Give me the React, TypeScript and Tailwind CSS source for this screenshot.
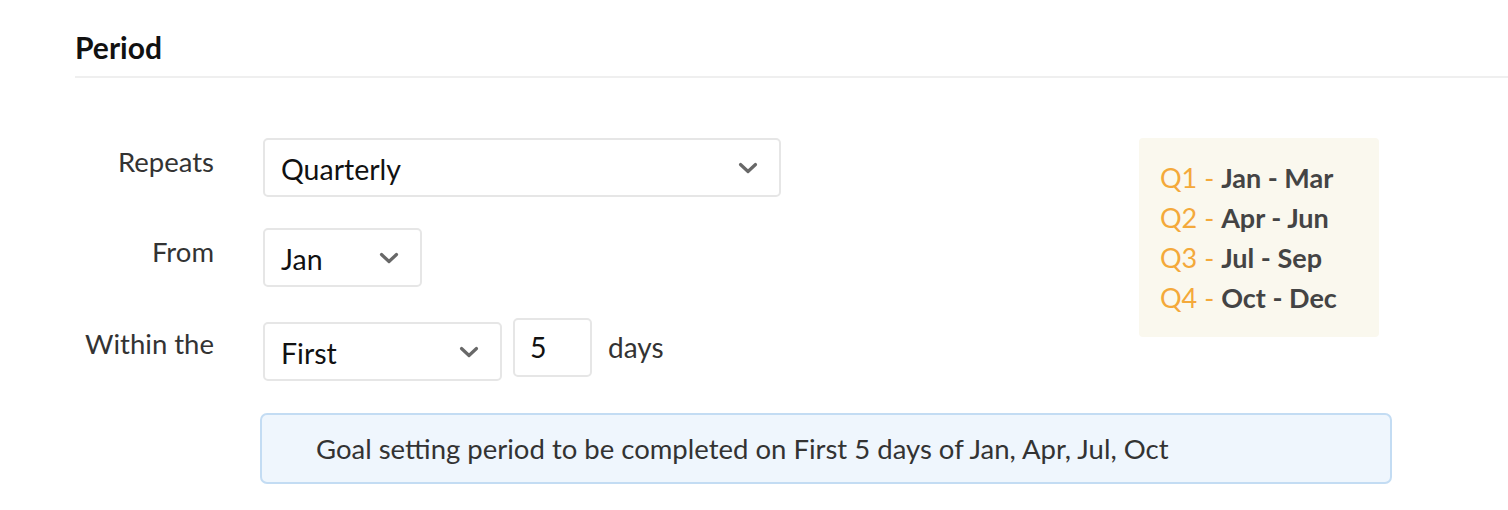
function Chevron() {
  return (
    <svg width="20" height="12" viewBox="0 0 20 12" className="shrink-0">
      <path
        d="M2.5 2.5 L10 9.5 L17.5 2.5"
        fill="none"
        stroke="#686868"
        strokeWidth="3.2"
        strokeLinecap="round"
        strokeLinejoin="round"
      />
    </svg>
  );
}

function Select({
  value,
  width,
  className = "",
}: {
  value: string;
  width: string;
  className?: string;
}) {
  return (
    <div
      className={`${width} h-[59px] flex items-center justify-between pl-[16px] pr-[21px] border-2 border-[#e6e6e6] rounded-[5px] bg-white ${className}`}
    >
      <span className="text-[28.5px] text-[#111] pt-[4px]">{value}</span>
      <Chevron />
    </div>
  );
}

function Label({ children }: { children: string }) {
  return (
    <div className="w-[139px] text-right text-[27.5px] leading-[30px] text-[#333] pt-[9px] shrink-0 whitespace-nowrap">
      {children}
    </div>
  );
}

const quarters = [
  ["Q1", "Jan - Mar"],
  ["Q2", "Apr - Jun"],
  ["Q3", "Jul - Sep"],
  ["Q4", "Oct - Dec"],
];

export default function App() {
  return (
    <div
      className="w-[1508px] h-[510px] bg-white overflow-hidden"
      style={{ fontFamily: "Lato, 'Noto Sans', sans-serif" }}
    >
      <div className="pl-[75px] pt-[27px]">
        <h1 className="text-[30px] font-bold leading-[40px] text-[#111]">
          Period
        </h1>
        <div className="mt-[9px] h-[2px] bg-[#efefef]" />
      </div>

      <div className="flex justify-between pl-[75px] pr-[129px] pt-[60px]">
        <div className="flex flex-col">
          <div className="flex items-start">
            <Label>Repeats</Label>
            <Select value="Quarterly" width="w-[518px]" className="ml-[49px]" />
          </div>
          <div className="flex items-start mt-[31px]">
            <Label>From</Label>
            <Select value="Jan" width="w-[159px]" className="ml-[49px]" />
          </div>
          <div className="flex items-start mt-[31px]">
            <div className="pt-[2px]">
              <Label>Within the</Label>
            </div>
            <Select value="First" width="w-[239px]" className="ml-[49px] mt-[4px]" />
            <div className="ml-[11px] w-[79px] h-[59px] border-2 border-[#e6e6e6] rounded-[5px] flex items-center pl-[15px] text-[28.5px] text-[#111]">
              5
            </div>
            <span className="ml-[16px] text-[28px] leading-[59px] text-[#333]">
              days
            </span>
          </div>
        </div>

        <div className="w-[240px] h-[199px] bg-[#faf8ee] rounded-[4px] pl-[21px] pt-[20px]">
          {quarters.map(([q, range]) => (
            <div key={q} className="text-[27px] leading-[40px] whitespace-nowrap">
              <span className="text-[#f4a93a]">{q} - </span>
              <span className="font-bold text-[#444]">{range}</span>
            </div>
          ))}
        </div>
      </div>

      <div className="ml-[260px] mt-[32px] w-[1132px] h-[71px] bg-[#eff6fd] border-2 border-[#c3dcf3] rounded-[7px] flex items-center pl-[54px]">
        <span className="text-[27.5px] text-[#333]">
          Goal setting period to be completed on First 5 days of Jan, Apr, Jul, Oct
        </span>
      </div>
    </div>
  );
}
